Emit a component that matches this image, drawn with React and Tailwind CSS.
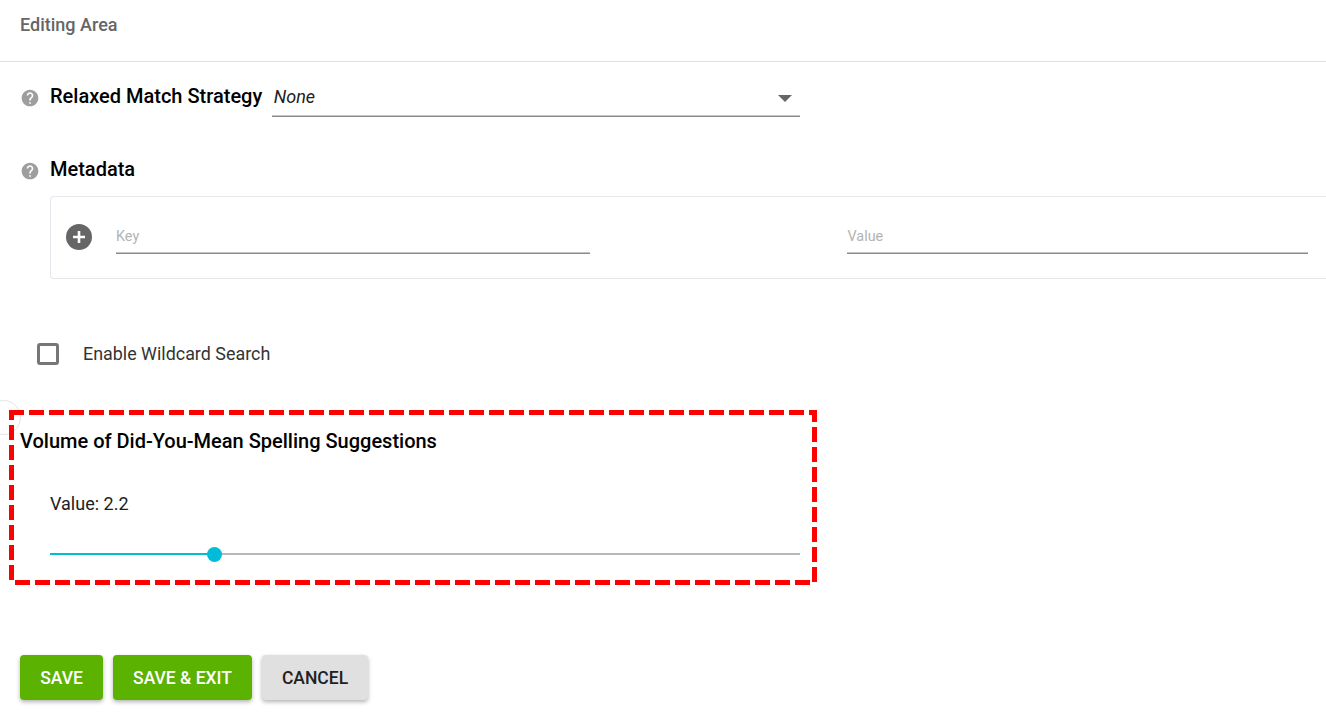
import React from "react";

function Help({ className }) {
  return (
    <svg viewBox="0 0 24 24" className={"w-5 h-5 shrink-0 " + className} fill="#9e9e9e">
      <path d="M12 2C6.48 2 2 6.48 2 12s4.48 10 10 10 10-4.48 10-10S17.52 2 12 2zm1 17h-2v-2h2v2zm2.07-7.75l-.9.92C13.45 12.9 13 13.5 13 15h-2v-.5c0-1.1.45-2.1 1.17-2.83l1.24-1.26c.37-.36.59-.86.59-1.41 0-1.1-.9-2-2-2s-2 .9-2 2H8c0-2.21 1.79-4 4-4s4 1.79 4 4c0 .88-.36 1.68-.93 2.25z" />
    </svg>
  );
}

function DashedFrame() {
  return (
    <svg className="absolute -left-px top-0 w-[808px] h-[175px]" viewBox="9 410 808 175" fill="none" stroke="#ff0000" strokeWidth="5" strokeDasharray="15 5">
      <line x1="9" y1="412.5" x2="817" y2="412.5" />
      <line x1="814.5" y1="410" x2="814.5" y2="582" strokeDashoffset="3" />
      <line x1="15" y1="582.5" x2="810" y2="582.5" />
      <line x1="11.5" y1="410" x2="11.5" y2="581" strokeDashoffset="-15" />
    </svg>
  );
}

export default function App() {
  return (
    <div className="relative w-[1326px] h-[718px] overflow-hidden bg-white font-['Roboto',sans-serif]">
      <header className="h-[62px] border-b border-[#e0e0e0] pl-5 pt-[14px] text-[18px] leading-[22px] font-medium text-[#666666]">
        Editing Area
      </header>

      <section className="flex items-start pl-5 pt-[24px] h-[92px]">
        <Help className="mt-[1.5px]" />
        <div className="ml-[10px] -mt-[1px] text-[20px] leading-[22px] font-medium text-black whitespace-nowrap">Relaxed Match Strategy</div>
        <div className="relative ml-[10px] -mt-[7px] w-[528px] h-[38px] border-b border-[#8a8a8a] shadow-[inset_0_-1px_0_#c4c4c4] pl-[1.5px] pt-[7px] text-[18px] leading-[22px] italic text-[#212121]">
          None
          <span className="absolute right-[8px] top-[16px] w-0 h-0 border-x-[7px] border-x-transparent border-t-[7px] border-t-[#666666]" />
        </div>
      </section>

      <section className="pl-5 flex items-start pt-[4px] h-[42px]">
        <Help className="mt-[3px]" />
        <div className="ml-[10px] text-[20px] leading-[22px] font-medium text-black">Metadata</div>
      </section>

      <div className="ml-[50px] h-[83px] border border-r-0 border-[#e6e6ec] rounded-l flex items-start pl-[15px] pt-[27px]">
        <svg viewBox="0 0 26 26" className="w-[26px] h-[26px] shrink-0">
          <circle cx="13" cy="13" r="13" fill="#666666" />
          <path d="M13 7v12M7 13h12" stroke="#ffffff" strokeWidth="2.6" />
        </svg>
        <div className="ml-[24px] w-[474px] h-[31px] -mt-[1px] border-b border-[#8a8a8a] shadow-[inset_0_-1px_0_#c4c4c4] text-[14.4px] leading-[22px] text-[#b3b3b3] pt-[3px]">Key</div>
        <div className="ml-[257px] w-[461px] h-[31px] -mt-[1px] border-b border-[#8a8a8a] shadow-[inset_0_-1px_0_#c4c4c4] text-[14.4px] leading-[22px] text-[#b3b3b3] pt-[3px] pl-[0.5px]">Value</div>
      </div>

      <label className="flex items-center pl-[37px] mt-[63px] h-[24px]">
        <span className="w-[22px] h-[22px] border-[3px] border-[#777777] rounded-[3px]" />
        <span className="ml-[24px] text-[17.9px] leading-[22px] text-[#333333] whitespace-nowrap">Enable Wildcard Search</span>
      </label>

      <section className="relative mt-[44px] ml-[10px] w-[807px] h-[175px] pl-[10px] pt-[20px]">
        <span className="absolute -left-[24px] -top-[10px] w-[35px] h-[35px] rounded-full border border-[#e4e4e4]" />
        <DashedFrame />
        <div className="relative text-[20px] leading-[22px] font-medium text-black whitespace-nowrap">Volume of Did-You-Mean Spelling Suggestions</div>
        <div className="relative ml-[30px] mt-[41px] text-[18px] leading-[22px] text-[#212121]">Value: 2.2</div>
        <div className="relative ml-[30px] mt-[38px] w-[750px] h-[2px] bg-[#b8b8b8]">
          <div className="h-full w-[160px] bg-[#00bcd9]" />
          <span className="absolute left-[157px] -top-[6.5px] w-[15px] h-[15px] rounded-full bg-[#00bcd9]" />
        </div>
      </section>

      <div className="flex pl-5 mt-[70px] gap-[10px]">
        <button className="w-[83px] h-[45px] pt-px rounded bg-[#5bb200] text-white text-[17.5px] font-medium shadow-[0_2px_4px_rgba(0,0,0,0.3)]">SAVE</button>
        <button className="w-[139px] h-[45px] pt-px rounded bg-[#5bb200] text-white text-[17.5px] font-medium shadow-[0_2px_4px_rgba(0,0,0,0.3)]">SAVE &amp; EXIT</button>
        <button className="w-[106px] h-[45px] pt-px rounded bg-[#e0e0e0] text-[#212121] text-[17.5px] font-medium shadow-[0_2px_4px_rgba(0,0,0,0.3)]">CANCEL</button>
      </div>
    </div>
  );
}
